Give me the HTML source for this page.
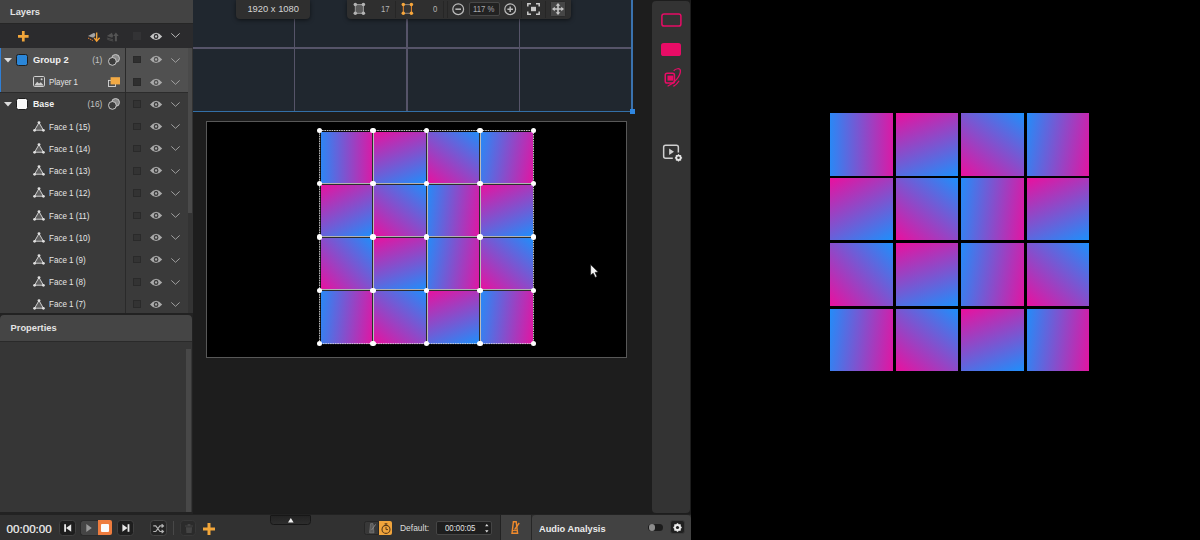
<!DOCTYPE html>
<html><head><meta charset="utf-8"><title>ui</title><style>
*{box-sizing:border-box;margin:0;padding:0}
html,body{width:1200px;height:540px;overflow:hidden;background:#000}
body{font-family:"Liberation Sans",sans-serif;font-size:10px;color:#ddd;position:relative}
.a{position:absolute}
.t{position:absolute;white-space:nowrap;line-height:1}
svg{position:absolute;overflow:visible}
</style></head><body>
<div class="a" style="left:0px;top:0px;width:690.6px;height:540px;background:#1d1d1d;"></div>
<div class="a" style="left:690.6px;top:0px;width:509.4px;height:540px;background:#000;"></div>
<div class="a" style="left:193px;top:0px;width:439.5px;height:111px;background:#20272f;"></div>
<div class="a" style="left:293.9px;top:0px;width:1.4px;height:111px;background:#565469;"></div>
<div class="a" style="left:406.15px;top:0px;width:1.4px;height:111px;background:#565469;"></div>
<div class="a" style="left:518.6px;top:0px;width:1.4px;height:111px;background:#565469;"></div>
<div class="a" style="left:193px;top:47.4px;width:439px;height:1.4px;background:#565469;"></div>
<div class="a" style="left:193px;top:110.8px;width:440px;height:1.2px;background:#336fa6;"></div>
<div class="a" style="left:631.4px;top:0px;width:1.3px;height:112px;background:#3a72ae;"></div>
<div class="a" style="left:629.5px;top:108.5px;width:5.5px;height:5.5px;background:#2f86e0;"></div>
<div class="a" style="left:205.5px;top:120.6px;width:421.4px;height:237.3px;background:#000;border:1px solid #585858"></div>
<div class="a" style="left:319.6px;top:130.5px;width:53.47px;height:53.28px;background:linear-gradient(90deg,#1e8ffb -7%,#ea109e 109%);"></div>
<div class="a" style="left:373.07px;top:130.5px;width:53.47px;height:53.28px;background:linear-gradient(338deg,#1e8ffb,#ea109e);"></div>
<div class="a" style="left:426.54px;top:130.5px;width:53.47px;height:53.28px;background:linear-gradient(218deg,#1e8ffb,#ea109e);"></div>
<div class="a" style="left:480.01px;top:130.5px;width:53.47px;height:53.28px;background:linear-gradient(100deg,#1e8ffb -3%,#ea109e 104%);"></div>
<div class="a" style="left:319.6px;top:183.78px;width:53.47px;height:53.28px;background:linear-gradient(332deg,#1e8ffb,#ea109e);"></div>
<div class="a" style="left:373.07px;top:183.78px;width:53.47px;height:53.28px;background:linear-gradient(220deg,#1e8ffb,#ea109e);"></div>
<div class="a" style="left:426.54px;top:183.78px;width:53.47px;height:53.28px;background:linear-gradient(97deg,#1e8ffb -3%,#ea109e 104%);"></div>
<div class="a" style="left:480.01px;top:183.78px;width:53.47px;height:53.28px;background:linear-gradient(336deg,#1e8ffb,#ea109e);"></div>
<div class="a" style="left:319.6px;top:237.06px;width:53.47px;height:53.28px;background:linear-gradient(228deg,#1e8ffb,#ea109e);"></div>
<div class="a" style="left:373.07px;top:237.06px;width:53.47px;height:53.28px;background:linear-gradient(340deg,#1e8ffb,#ea109e);"></div>
<div class="a" style="left:426.54px;top:237.06px;width:53.47px;height:53.28px;background:linear-gradient(100deg,#1e8ffb -3%,#ea109e 104%);"></div>
<div class="a" style="left:480.01px;top:237.06px;width:53.47px;height:53.28px;background:linear-gradient(222deg,#1e8ffb,#ea109e);"></div>
<div class="a" style="left:319.6px;top:290.34px;width:53.47px;height:53.28px;background:linear-gradient(97deg,#1e8ffb -3%,#ea109e 104%);"></div>
<div class="a" style="left:373.07px;top:290.34px;width:53.47px;height:53.28px;background:linear-gradient(220deg,#1e8ffb,#ea109e);"></div>
<div class="a" style="left:426.54px;top:290.34px;width:53.47px;height:53.28px;background:linear-gradient(338deg,#1e8ffb,#ea109e);"></div>
<div class="a" style="left:480.01px;top:290.34px;width:53.47px;height:53.28px;background:linear-gradient(97deg,#1e8ffb -3%,#ea109e 104%);"></div>
<div class="a" style="left:372.17px;top:130.5px;width:0.9px;height:213.12px;background:#2c2c2c;"></div>
<div class="a" style="left:373.07px;top:130.5px;width:0.9px;height:213.12px;background:#bcbcbc;"></div>
<div class="a" style="left:425.64px;top:130.5px;width:0.9px;height:213.12px;background:#2c2c2c;"></div>
<div class="a" style="left:426.54px;top:130.5px;width:0.9px;height:213.12px;background:#bcbcbc;"></div>
<div class="a" style="left:479.11px;top:130.5px;width:0.9px;height:213.12px;background:#2c2c2c;"></div>
<div class="a" style="left:480.01px;top:130.5px;width:0.9px;height:213.12px;background:#bcbcbc;"></div>
<div class="a" style="left:319.6px;top:182.88px;width:213.88px;height:0.9px;background:#b4b4b4;"></div>
<div class="a" style="left:319.6px;top:183.78px;width:213.88px;height:0.9px;background:#2c2c2c;"></div>
<div class="a" style="left:319.6px;top:236.16px;width:213.88px;height:0.9px;background:#b4b4b4;"></div>
<div class="a" style="left:319.6px;top:237.06px;width:213.88px;height:0.9px;background:#2c2c2c;"></div>
<div class="a" style="left:319.6px;top:289.44px;width:213.88px;height:0.9px;background:#b4b4b4;"></div>
<div class="a" style="left:319.6px;top:290.34px;width:213.88px;height:0.9px;background:#2c2c2c;"></div>
<div class="a" style="left:319.1px;top:130.0px;width:1.7px;height:214.12px;background:#0a0a0a;"></div>
<div class="a" style="left:319.1px;top:130.0px;width:214.88px;height:1.7px;background:#0a0a0a;"></div>
<svg style="left:0;top:0" width="1200" height="540"><rect x="319.6" y="130.5" width="213.88" height="213.12" fill="none" stroke="#dcdcdc" stroke-width="0.9" stroke-dasharray="1.6 0.8"/></svg>
<div class="a" style="left:316.9px;top:127.8px;width:5.4px;height:5.4px;background:#fff;border-radius:50%"></div>
<div class="a" style="left:316.9px;top:181.08px;width:5.4px;height:5.4px;background:#fff;border-radius:50%"></div>
<div class="a" style="left:316.9px;top:234.36px;width:5.4px;height:5.4px;background:#fff;border-radius:50%"></div>
<div class="a" style="left:316.9px;top:287.64px;width:5.4px;height:5.4px;background:#fff;border-radius:50%"></div>
<div class="a" style="left:316.9px;top:340.92px;width:5.4px;height:5.4px;background:#fff;border-radius:50%"></div>
<div class="a" style="left:370.37px;top:127.8px;width:5.4px;height:5.4px;background:#fff;border-radius:50%"></div>
<div class="a" style="left:370.37px;top:181.08px;width:5.4px;height:5.4px;background:#fff;border-radius:50%"></div>
<div class="a" style="left:370.37px;top:234.36px;width:5.4px;height:5.4px;background:#fff;border-radius:50%"></div>
<div class="a" style="left:370.37px;top:287.64px;width:5.4px;height:5.4px;background:#fff;border-radius:50%"></div>
<div class="a" style="left:370.37px;top:340.92px;width:5.4px;height:5.4px;background:#fff;border-radius:50%"></div>
<div class="a" style="left:423.84px;top:127.8px;width:5.4px;height:5.4px;background:#fff;border-radius:50%"></div>
<div class="a" style="left:423.84px;top:181.08px;width:5.4px;height:5.4px;background:#fff;border-radius:50%"></div>
<div class="a" style="left:423.84px;top:234.36px;width:5.4px;height:5.4px;background:#fff;border-radius:50%"></div>
<div class="a" style="left:423.84px;top:287.64px;width:5.4px;height:5.4px;background:#fff;border-radius:50%"></div>
<div class="a" style="left:423.84px;top:340.92px;width:5.4px;height:5.4px;background:#fff;border-radius:50%"></div>
<div class="a" style="left:477.31px;top:127.8px;width:5.4px;height:5.4px;background:#fff;border-radius:50%"></div>
<div class="a" style="left:477.31px;top:181.08px;width:5.4px;height:5.4px;background:#fff;border-radius:50%"></div>
<div class="a" style="left:477.31px;top:234.36px;width:5.4px;height:5.4px;background:#fff;border-radius:50%"></div>
<div class="a" style="left:477.31px;top:287.64px;width:5.4px;height:5.4px;background:#fff;border-radius:50%"></div>
<div class="a" style="left:477.31px;top:340.92px;width:5.4px;height:5.4px;background:#fff;border-radius:50%"></div>
<div class="a" style="left:530.78px;top:127.8px;width:5.4px;height:5.4px;background:#fff;border-radius:50%"></div>
<div class="a" style="left:530.78px;top:181.08px;width:5.4px;height:5.4px;background:#fff;border-radius:50%"></div>
<div class="a" style="left:530.78px;top:234.36px;width:5.4px;height:5.4px;background:#fff;border-radius:50%"></div>
<div class="a" style="left:530.78px;top:287.64px;width:5.4px;height:5.4px;background:#fff;border-radius:50%"></div>
<div class="a" style="left:530.78px;top:340.92px;width:5.4px;height:5.4px;background:#fff;border-radius:50%"></div>
<svg style="left:0;top:0" width="1200" height="540"><polygon points="590.6,264.6 590.6,275.2 593.2,273.2 595.3,277.4 597,276.6 595,272.4 598.2,272" fill="#f4f4f4" stroke="#111" stroke-width="0.6"/></svg>
<div class="a" style="left:830px;top:113px;width:63px;height:62.5px;background:linear-gradient(90deg,#1e8ffb -7%,#ea109e 109%);"></div>
<div class="a" style="left:896px;top:113px;width:61.9px;height:62.5px;background:linear-gradient(338deg,#1e8ffb,#ea109e);"></div>
<div class="a" style="left:961px;top:113px;width:63.1px;height:62.5px;background:linear-gradient(218deg,#1e8ffb,#ea109e);"></div>
<div class="a" style="left:1026.5px;top:113px;width:62.5px;height:62.5px;background:linear-gradient(100deg,#1e8ffb -3%,#ea109e 104%);"></div>
<div class="a" style="left:830px;top:178.1px;width:63px;height:62.2px;background:linear-gradient(332deg,#1e8ffb,#ea109e);"></div>
<div class="a" style="left:896px;top:178.1px;width:61.9px;height:62.2px;background:linear-gradient(220deg,#1e8ffb,#ea109e);"></div>
<div class="a" style="left:961px;top:178.1px;width:63.1px;height:62.2px;background:linear-gradient(97deg,#1e8ffb -3%,#ea109e 104%);"></div>
<div class="a" style="left:1026.5px;top:178.1px;width:62.5px;height:62.2px;background:linear-gradient(336deg,#1e8ffb,#ea109e);"></div>
<div class="a" style="left:830px;top:243px;width:63px;height:62.8px;background:linear-gradient(228deg,#1e8ffb,#ea109e);"></div>
<div class="a" style="left:896px;top:243px;width:61.9px;height:62.8px;background:linear-gradient(340deg,#1e8ffb,#ea109e);"></div>
<div class="a" style="left:961px;top:243px;width:63.1px;height:62.8px;background:linear-gradient(100deg,#1e8ffb -3%,#ea109e 104%);"></div>
<div class="a" style="left:1026.5px;top:243px;width:62.5px;height:62.8px;background:linear-gradient(222deg,#1e8ffb,#ea109e);"></div>
<div class="a" style="left:830px;top:309px;width:63px;height:62px;background:linear-gradient(97deg,#1e8ffb -3%,#ea109e 104%);"></div>
<div class="a" style="left:896px;top:309px;width:61.9px;height:62px;background:linear-gradient(220deg,#1e8ffb,#ea109e);"></div>
<div class="a" style="left:961px;top:309px;width:63.1px;height:62px;background:linear-gradient(338deg,#1e8ffb,#ea109e);"></div>
<div class="a" style="left:1026.5px;top:309px;width:62.5px;height:62px;background:linear-gradient(97deg,#1e8ffb -3%,#ea109e 104%);"></div>
<div class="a" style="left:0px;top:0px;width:193px;height:23px;background:#434343;"></div>
<div class="t" style="left:10px;top:7.6px;font-size:9.3px;color:#e4e4e4;font-weight:bold;">Layers</div>
<div class="a" style="left:0px;top:23px;width:193px;height:1px;background:#262626;"></div>
<div class="a" style="left:0px;top:24px;width:193px;height:23.6px;background:#2b2b2d;"></div>
<div class="a" style="left:0px;top:47.6px;width:193px;height:0.4px;background:#222;"></div>
<div class="a" style="left:0px;top:48px;width:187.5px;height:264.5px;background:#3a3a3a;"></div>
<div class="a" style="left:187.5px;top:48px;width:5.5px;height:264.5px;background:#333;"></div>
<div class="a" style="left:188.3px;top:48px;width:4px;height:165px;background:#4a4a4a;"></div>
<div class="a" style="left:0px;top:48px;width:187.5px;height:44.2px;background:#505050;"></div>
<div class="a" style="left:0px;top:48px;width:1.3px;height:44.2px;background:#2f7fd6;"></div>
<div class="a" style="left:0px;top:92px;width:187.5px;height:1px;background:#2c2c2c;"></div>
<div class="a" style="left:125px;top:48px;width:1px;height:264.5px;background:#2a2a2a;"></div>
<div class="a" style="left:0px;top:312.5px;width:193px;height:3px;background:#222;"></div>
<div class="a" style="left:0px;top:315.2px;width:192px;height:25.8px;background:#454545;border-radius:4px 4px 0 0"></div>
<div class="t" style="left:10.6px;top:323.6px;font-size:9.3px;color:#e4e4e4;font-weight:bold;">Properties</div>
<div class="a" style="left:0px;top:341px;width:192px;height:1px;background:#2a2a2a;"></div>
<div class="a" style="left:0px;top:342px;width:192px;height:170.5px;background:#363636;"></div>
<div class="a" style="left:186.4px;top:349px;width:4.5px;height:163.3px;background:#484848;"></div>
<div class="a" style="left:192px;top:315.5px;width:1px;height:197px;background:#222;"></div>
<div class="a" style="left:0px;top:512.4px;width:193px;height:3px;background:#222;"></div>
<svg style="left:17.6px;top:31px" width="10.6" height="10.6" viewBox="0 0 11 11"><path d="M4.1 0h2.8v4.1H11v2.8H6.9V11H4.1V6.9H0V4.1h4.1z" fill="#f2a63a"/></svg>
<svg style="left:88px;top:31.5px" width="13" height="10" viewBox="0 0 13 10"><path d="M0 4.1 L5.6 0.9 L7.2 1.4 L7.2 3.9 L5.2 5.7Z" fill="#a4a4a4"/><path d="M0 6 L4.9 8.6" fill="none" stroke="#f0822e" stroke-width="1" stroke-dasharray="1.6 0.7"/><path d="M8.7 0.4 V8.8" fill="none" stroke="#f5a83c" stroke-width="1.3"/><path d="M6.2 5.8 L8.7 9.2 L11.6 5.8" fill="none" stroke="#f5a035" stroke-width="1.4"/></svg>
<svg style="left:107.3px;top:31.5px" width="13" height="10" viewBox="0 0 13 10"><path d="M4.9 0.8 L-0.1 4.1 L5.2 5.7 L6.2 4Z" fill="#525252"/><path d="M-0.1 6 L6 7.8 M0.4 7.4 L6.3 9.1" fill="none" stroke="#4c4c4c" stroke-width="1"/><path d="M8.9 9.3 V2.5" fill="none" stroke="#545454" stroke-width="2"/><path d="M6.2 4 L8.9 0.4 L11.7 4Z" fill="#545454"/></svg>
<div class="a" style="left:133.3px;top:32.4px;width:7.4px;height:7.4px;background:#333335;"></div>
<svg style="left:150px;top:31.6px" width="12.2" height="8.8" viewBox="0 0 12 8" preserveAspectRatio="none"><path d="M0 4 Q6 -2.6 12 4 Q6 10.6 0 4Z" fill="#c4c4c4"/><circle cx="6" cy="4" r="2.3" fill="#2b2b2d"/><circle cx="6" cy="4" r="1.1" fill="#c4c4c4"/></svg>
<svg style="left:171.3px;top:33.4px" width="9" height="5" viewBox="0 0 9 5"><path d="M0.3 0.4 L4.5 4.3 L8.7 0.4" fill="none" stroke="#c4c4c4" stroke-width="0.9"/></svg>
<div class="a" style="left:133.3px;top:56.05px;width:7.4px;height:7.4px;background:#2f2f2f;border:0.5px solid #2a2a2a"></div>
<svg style="left:150px;top:55.35px" width="12.2" height="8.8" viewBox="0 0 12 8" preserveAspectRatio="none"><path d="M0 4 Q6 -2.6 12 4 Q6 10.6 0 4Z" fill="#aaaaaa"/><circle cx="6" cy="4" r="2.3" fill="#505050"/><circle cx="6" cy="4" r="1.1" fill="#aaaaaa"/></svg>
<svg style="left:171.3px;top:57.55px" width="9" height="5" viewBox="0 0 9 5"><path d="M0.3 0.4 L4.5 4.3 L8.7 0.4" fill="none" stroke="#a8a8a8" stroke-width="0.9"/></svg>
<div class="a" style="left:133.3px;top:78.27px;width:7.4px;height:7.4px;background:#2f2f2f;border:0.5px solid #2a2a2a"></div>
<svg style="left:150px;top:77.57px" width="12.2" height="8.8" viewBox="0 0 12 8" preserveAspectRatio="none"><path d="M0 4 Q6 -2.6 12 4 Q6 10.6 0 4Z" fill="#aaaaaa"/><circle cx="6" cy="4" r="2.3" fill="#505050"/><circle cx="6" cy="4" r="1.1" fill="#aaaaaa"/></svg>
<svg style="left:171.3px;top:79.77px" width="9" height="5" viewBox="0 0 9 5"><path d="M0.3 0.4 L4.5 4.3 L8.7 0.4" fill="none" stroke="#a8a8a8" stroke-width="0.9"/></svg>
<div class="a" style="left:133.3px;top:100.49px;width:7.4px;height:7.4px;background:#333;border:0.5px solid #2a2a2a"></div>
<svg style="left:150px;top:99.78999999999999px" width="12.2" height="8.8" viewBox="0 0 12 8" preserveAspectRatio="none"><path d="M0 4 Q6 -2.6 12 4 Q6 10.6 0 4Z" fill="#aaaaaa"/><circle cx="6" cy="4" r="2.3" fill="#3a3a3a"/><circle cx="6" cy="4" r="1.1" fill="#aaaaaa"/></svg>
<svg style="left:171.3px;top:101.99px" width="9" height="5" viewBox="0 0 9 5"><path d="M0.3 0.4 L4.5 4.3 L8.7 0.4" fill="none" stroke="#a8a8a8" stroke-width="0.9"/></svg>
<div class="a" style="left:133.3px;top:122.71px;width:7.4px;height:7.4px;background:#333;border:0.5px solid #2a2a2a"></div>
<svg style="left:150px;top:122.00999999999999px" width="12.2" height="8.8" viewBox="0 0 12 8" preserveAspectRatio="none"><path d="M0 4 Q6 -2.6 12 4 Q6 10.6 0 4Z" fill="#aaaaaa"/><circle cx="6" cy="4" r="2.3" fill="#3a3a3a"/><circle cx="6" cy="4" r="1.1" fill="#aaaaaa"/></svg>
<svg style="left:171.3px;top:124.21px" width="9" height="5" viewBox="0 0 9 5"><path d="M0.3 0.4 L4.5 4.3 L8.7 0.4" fill="none" stroke="#a8a8a8" stroke-width="0.9"/></svg>
<div class="a" style="left:133.3px;top:144.93px;width:7.4px;height:7.4px;background:#333;border:0.5px solid #2a2a2a"></div>
<svg style="left:150px;top:144.23px" width="12.2" height="8.8" viewBox="0 0 12 8" preserveAspectRatio="none"><path d="M0 4 Q6 -2.6 12 4 Q6 10.6 0 4Z" fill="#aaaaaa"/><circle cx="6" cy="4" r="2.3" fill="#3a3a3a"/><circle cx="6" cy="4" r="1.1" fill="#aaaaaa"/></svg>
<svg style="left:171.3px;top:146.43px" width="9" height="5" viewBox="0 0 9 5"><path d="M0.3 0.4 L4.5 4.3 L8.7 0.4" fill="none" stroke="#a8a8a8" stroke-width="0.9"/></svg>
<div class="a" style="left:133.3px;top:167.15px;width:7.4px;height:7.4px;background:#333;border:0.5px solid #2a2a2a"></div>
<svg style="left:150px;top:166.45px" width="12.2" height="8.8" viewBox="0 0 12 8" preserveAspectRatio="none"><path d="M0 4 Q6 -2.6 12 4 Q6 10.6 0 4Z" fill="#aaaaaa"/><circle cx="6" cy="4" r="2.3" fill="#3a3a3a"/><circle cx="6" cy="4" r="1.1" fill="#aaaaaa"/></svg>
<svg style="left:171.3px;top:168.65px" width="9" height="5" viewBox="0 0 9 5"><path d="M0.3 0.4 L4.5 4.3 L8.7 0.4" fill="none" stroke="#a8a8a8" stroke-width="0.9"/></svg>
<div class="a" style="left:133.3px;top:189.37px;width:7.4px;height:7.4px;background:#333;border:0.5px solid #2a2a2a"></div>
<svg style="left:150px;top:188.67px" width="12.2" height="8.8" viewBox="0 0 12 8" preserveAspectRatio="none"><path d="M0 4 Q6 -2.6 12 4 Q6 10.6 0 4Z" fill="#aaaaaa"/><circle cx="6" cy="4" r="2.3" fill="#3a3a3a"/><circle cx="6" cy="4" r="1.1" fill="#aaaaaa"/></svg>
<svg style="left:171.3px;top:190.87px" width="9" height="5" viewBox="0 0 9 5"><path d="M0.3 0.4 L4.5 4.3 L8.7 0.4" fill="none" stroke="#a8a8a8" stroke-width="0.9"/></svg>
<div class="a" style="left:133.3px;top:211.59px;width:7.4px;height:7.4px;background:#333;border:0.5px solid #2a2a2a"></div>
<svg style="left:150px;top:210.89px" width="12.2" height="8.8" viewBox="0 0 12 8" preserveAspectRatio="none"><path d="M0 4 Q6 -2.6 12 4 Q6 10.6 0 4Z" fill="#aaaaaa"/><circle cx="6" cy="4" r="2.3" fill="#3a3a3a"/><circle cx="6" cy="4" r="1.1" fill="#aaaaaa"/></svg>
<svg style="left:171.3px;top:213.09px" width="9" height="5" viewBox="0 0 9 5"><path d="M0.3 0.4 L4.5 4.3 L8.7 0.4" fill="none" stroke="#a8a8a8" stroke-width="0.9"/></svg>
<div class="a" style="left:133.3px;top:233.81px;width:7.4px;height:7.4px;background:#333;border:0.5px solid #2a2a2a"></div>
<svg style="left:150px;top:233.10999999999999px" width="12.2" height="8.8" viewBox="0 0 12 8" preserveAspectRatio="none"><path d="M0 4 Q6 -2.6 12 4 Q6 10.6 0 4Z" fill="#aaaaaa"/><circle cx="6" cy="4" r="2.3" fill="#3a3a3a"/><circle cx="6" cy="4" r="1.1" fill="#aaaaaa"/></svg>
<svg style="left:171.3px;top:235.31px" width="9" height="5" viewBox="0 0 9 5"><path d="M0.3 0.4 L4.5 4.3 L8.7 0.4" fill="none" stroke="#a8a8a8" stroke-width="0.9"/></svg>
<div class="a" style="left:133.3px;top:256.03px;width:7.4px;height:7.4px;background:#333;border:0.5px solid #2a2a2a"></div>
<svg style="left:150px;top:255.32999999999998px" width="12.2" height="8.8" viewBox="0 0 12 8" preserveAspectRatio="none"><path d="M0 4 Q6 -2.6 12 4 Q6 10.6 0 4Z" fill="#aaaaaa"/><circle cx="6" cy="4" r="2.3" fill="#3a3a3a"/><circle cx="6" cy="4" r="1.1" fill="#aaaaaa"/></svg>
<svg style="left:171.3px;top:257.53px" width="9" height="5" viewBox="0 0 9 5"><path d="M0.3 0.4 L4.5 4.3 L8.7 0.4" fill="none" stroke="#a8a8a8" stroke-width="0.9"/></svg>
<div class="a" style="left:133.3px;top:278.25px;width:7.4px;height:7.4px;background:#333;border:0.5px solid #2a2a2a"></div>
<svg style="left:150px;top:277.55px" width="12.2" height="8.8" viewBox="0 0 12 8" preserveAspectRatio="none"><path d="M0 4 Q6 -2.6 12 4 Q6 10.6 0 4Z" fill="#aaaaaa"/><circle cx="6" cy="4" r="2.3" fill="#3a3a3a"/><circle cx="6" cy="4" r="1.1" fill="#aaaaaa"/></svg>
<svg style="left:171.3px;top:279.75px" width="9" height="5" viewBox="0 0 9 5"><path d="M0.3 0.4 L4.5 4.3 L8.7 0.4" fill="none" stroke="#a8a8a8" stroke-width="0.9"/></svg>
<div class="a" style="left:133.3px;top:300.47px;width:7.4px;height:7.4px;background:#333;border:0.5px solid #2a2a2a"></div>
<svg style="left:150px;top:299.77000000000004px" width="12.2" height="8.8" viewBox="0 0 12 8" preserveAspectRatio="none"><path d="M0 4 Q6 -2.6 12 4 Q6 10.6 0 4Z" fill="#aaaaaa"/><circle cx="6" cy="4" r="2.3" fill="#3a3a3a"/><circle cx="6" cy="4" r="1.1" fill="#aaaaaa"/></svg>
<svg style="left:171.3px;top:301.97px" width="9" height="5" viewBox="0 0 9 5"><path d="M0.3 0.4 L4.5 4.3 L8.7 0.4" fill="none" stroke="#a8a8a8" stroke-width="0.9"/></svg>
<svg style="left:4.3px;top:57.75px" width="8" height="5" viewBox="0 0 8 5"><path d="M0 0 L8 0 L4 4.6Z" fill="#dcdcdc"/></svg>
<div class="a" style="left:16.4px;top:53.95px;width:11.6px;height:11.6px;background:#2a86d8;border-radius:2.4px;border:0.8px solid #1e1e1e"></div>
<div class="t" style="left:32.8px;top:54.65px;font-size:9.8px;color:#f0f0f0;font-weight:bold;transform:scaleX(0.95);transform-origin:0 0;">Group 2</div>
<div class="t" style="right:1097.7px;top:55.65px;font-size:8.3px;color:#c4c4c4">(1)</div>
<svg style="left:108px;top:53.75px" width="12" height="12" viewBox="0 0 12 12"><circle cx="7.6" cy="4.4" r="3.9" fill="#8a8a8a" stroke="#cfcfcf" stroke-width="0.9"/><circle cx="4.4" cy="7.4" r="3.9" fill="#3c3c3c" stroke="#d8d8d8" stroke-width="0.9"/></svg>
<svg style="left:4.3px;top:102.19px" width="8" height="5" viewBox="0 0 8 5"><path d="M0 0 L8 0 L4 4.6Z" fill="#dcdcdc"/></svg>
<div class="a" style="left:16.4px;top:98.39px;width:11.6px;height:11.6px;background:#fafafa;border-radius:2.4px;border:0.8px solid #1e1e1e"></div>
<div class="t" style="left:32.8px;top:99.09px;font-size:9.8px;color:#f0f0f0;font-weight:bold;transform:scaleX(0.9);transform-origin:0 0;">Base</div>
<div class="t" style="right:1097.7px;top:100.09px;font-size:8.3px;color:#c4c4c4">(16)</div>
<svg style="left:108px;top:98.19px" width="12" height="12" viewBox="0 0 12 12"><circle cx="7.6" cy="4.4" r="3.9" fill="#8a8a8a" stroke="#cfcfcf" stroke-width="0.9"/><circle cx="4.4" cy="7.4" r="3.9" fill="#3c3c3c" stroke="#d8d8d8" stroke-width="0.9"/></svg>
<svg style="left:33px;top:75.87px" width="12" height="11" viewBox="0 0 12 11"><rect x="0.5" y="0.5" width="11" height="10" rx="1.2" fill="none" stroke="#cfcfcf" stroke-width="1"/><path d="M1.2 9.6 L4.2 5.8 L6 7.6 L7.8 6.2 L10.8 9.6Z" fill="#cfcfcf"/><circle cx="8.6" cy="3.3" r="1" fill="#cfcfcf"/></svg>
<div class="t" style="left:48.6px;top:77.67px;font-size:8.6px;color:#e6e6e6;font-weight:normal;transform:scaleX(0.92);transform-origin:0 0;">Player 1</div>
<svg style="left:108px;top:77.17px" width="12" height="10" viewBox="0 0 12 10"><rect x="0.5" y="3.4" width="7" height="6.1" fill="none" stroke="#d8d8d8" stroke-width="0.9"/><rect x="2.6" y="0.2" width="9.4" height="7.2" fill="#f2aa45"/></svg>
<svg style="left:33px;top:120.81px" width="12" height="11" viewBox="0 0 12 11"><path d="M6 1.6 L1.6 9.2 L10.4 9.2Z" fill="#5e5e5e" stroke="#cfcfcf" stroke-width="1"/><circle cx="6" cy="1.6" r="1.4" fill="#e0e0e0"/><circle cx="1.6" cy="9.3" r="1.4" fill="#e0e0e0"/><circle cx="10.4" cy="9.3" r="1.4" fill="#e0e0e0"/></svg>
<div class="t" style="left:48.5px;top:122.71px;font-size:8.6px;color:#e6e6e6;font-weight:normal;transform:scaleX(0.935);transform-origin:0 0;">Face 1 (15)</div>
<svg style="left:33px;top:143.03px" width="12" height="11" viewBox="0 0 12 11"><path d="M6 1.6 L1.6 9.2 L10.4 9.2Z" fill="#5e5e5e" stroke="#cfcfcf" stroke-width="1"/><circle cx="6" cy="1.6" r="1.4" fill="#e0e0e0"/><circle cx="1.6" cy="9.3" r="1.4" fill="#e0e0e0"/><circle cx="10.4" cy="9.3" r="1.4" fill="#e0e0e0"/></svg>
<div class="t" style="left:48.5px;top:144.93px;font-size:8.6px;color:#e6e6e6;font-weight:normal;transform:scaleX(0.935);transform-origin:0 0;">Face 1 (14)</div>
<svg style="left:33px;top:165.25px" width="12" height="11" viewBox="0 0 12 11"><path d="M6 1.6 L1.6 9.2 L10.4 9.2Z" fill="#5e5e5e" stroke="#cfcfcf" stroke-width="1"/><circle cx="6" cy="1.6" r="1.4" fill="#e0e0e0"/><circle cx="1.6" cy="9.3" r="1.4" fill="#e0e0e0"/><circle cx="10.4" cy="9.3" r="1.4" fill="#e0e0e0"/></svg>
<div class="t" style="left:48.5px;top:167.15px;font-size:8.6px;color:#e6e6e6;font-weight:normal;transform:scaleX(0.935);transform-origin:0 0;">Face 1 (13)</div>
<svg style="left:33px;top:187.47px" width="12" height="11" viewBox="0 0 12 11"><path d="M6 1.6 L1.6 9.2 L10.4 9.2Z" fill="#5e5e5e" stroke="#cfcfcf" stroke-width="1"/><circle cx="6" cy="1.6" r="1.4" fill="#e0e0e0"/><circle cx="1.6" cy="9.3" r="1.4" fill="#e0e0e0"/><circle cx="10.4" cy="9.3" r="1.4" fill="#e0e0e0"/></svg>
<div class="t" style="left:48.5px;top:189.37px;font-size:8.6px;color:#e6e6e6;font-weight:normal;transform:scaleX(0.935);transform-origin:0 0;">Face 1 (12)</div>
<svg style="left:33px;top:209.69px" width="12" height="11" viewBox="0 0 12 11"><path d="M6 1.6 L1.6 9.2 L10.4 9.2Z" fill="#5e5e5e" stroke="#cfcfcf" stroke-width="1"/><circle cx="6" cy="1.6" r="1.4" fill="#e0e0e0"/><circle cx="1.6" cy="9.3" r="1.4" fill="#e0e0e0"/><circle cx="10.4" cy="9.3" r="1.4" fill="#e0e0e0"/></svg>
<div class="t" style="left:48.5px;top:211.59px;font-size:8.6px;color:#e6e6e6;font-weight:normal;transform:scaleX(0.935);transform-origin:0 0;">Face 1 (11)</div>
<svg style="left:33px;top:231.91px" width="12" height="11" viewBox="0 0 12 11"><path d="M6 1.6 L1.6 9.2 L10.4 9.2Z" fill="#5e5e5e" stroke="#cfcfcf" stroke-width="1"/><circle cx="6" cy="1.6" r="1.4" fill="#e0e0e0"/><circle cx="1.6" cy="9.3" r="1.4" fill="#e0e0e0"/><circle cx="10.4" cy="9.3" r="1.4" fill="#e0e0e0"/></svg>
<div class="t" style="left:48.5px;top:233.81px;font-size:8.6px;color:#e6e6e6;font-weight:normal;transform:scaleX(0.935);transform-origin:0 0;">Face 1 (10)</div>
<svg style="left:33px;top:254.13px" width="12" height="11" viewBox="0 0 12 11"><path d="M6 1.6 L1.6 9.2 L10.4 9.2Z" fill="#5e5e5e" stroke="#cfcfcf" stroke-width="1"/><circle cx="6" cy="1.6" r="1.4" fill="#e0e0e0"/><circle cx="1.6" cy="9.3" r="1.4" fill="#e0e0e0"/><circle cx="10.4" cy="9.3" r="1.4" fill="#e0e0e0"/></svg>
<div class="t" style="left:48.5px;top:256.03px;font-size:8.6px;color:#e6e6e6;font-weight:normal;transform:scaleX(0.935);transform-origin:0 0;">Face 1 (9)</div>
<svg style="left:33px;top:276.35px" width="12" height="11" viewBox="0 0 12 11"><path d="M6 1.6 L1.6 9.2 L10.4 9.2Z" fill="#5e5e5e" stroke="#cfcfcf" stroke-width="1"/><circle cx="6" cy="1.6" r="1.4" fill="#e0e0e0"/><circle cx="1.6" cy="9.3" r="1.4" fill="#e0e0e0"/><circle cx="10.4" cy="9.3" r="1.4" fill="#e0e0e0"/></svg>
<div class="t" style="left:48.5px;top:278.25px;font-size:8.6px;color:#e6e6e6;font-weight:normal;transform:scaleX(0.935);transform-origin:0 0;">Face 1 (8)</div>
<svg style="left:33px;top:298.57px" width="12" height="11" viewBox="0 0 12 11"><path d="M6 1.6 L1.6 9.2 L10.4 9.2Z" fill="#5e5e5e" stroke="#cfcfcf" stroke-width="1"/><circle cx="6" cy="1.6" r="1.4" fill="#e0e0e0"/><circle cx="1.6" cy="9.3" r="1.4" fill="#e0e0e0"/><circle cx="10.4" cy="9.3" r="1.4" fill="#e0e0e0"/></svg>
<div class="t" style="left:48.5px;top:300.47px;font-size:8.6px;color:#e6e6e6;font-weight:normal;transform:scaleX(0.935);transform-origin:0 0;">Face 1 (7)</div>
<div class="a" style="left:236px;top:0px;width:73.7px;height:18.7px;background:#2f2f2f;border-radius:0 0 4px 4px;box-shadow:0 1px 4px rgba(0,0,0,.55)"></div>
<div class="t" style="left:247.4px;top:4.1px;font-size:9.4px;color:#d4d4d4;font-weight:normal;">1920 x 1080</div>
<div class="a" style="left:347px;top:0px;width:223.5px;height:18.6px;background:#2f2f2f;border-radius:0 0 4px 4px;box-shadow:0 1px 4px rgba(0,0,0,.55)"></div>
<svg style="left:353px;top:3px" width="13" height="12" viewBox="0 0 13 12"><rect x="2.3" y="1.6" width="8.1" height="8.7" fill="#5a5a5a"/><path d="M2.3 1.6 V10.3 M10.4 1.6 V10.3" stroke="#9c9c9c" stroke-width="1"/><path d="M2.3 1.6 H10.4 M2.3 10.3 H10.4" stroke="#9c9c9c" stroke-width="1"/><circle cx="2.3" cy="1.6" r="1.75" fill="#b4b4b4"/><circle cx="2.3" cy="10.3" r="1.75" fill="#b4b4b4"/><circle cx="10.4" cy="1.6" r="1.75" fill="#b4b4b4"/><circle cx="10.4" cy="10.3" r="1.75" fill="#b4b4b4"/></svg>
<div class="t" style="left:381.2px;top:5px;font-size:8.6px;color:#b4b4b4;font-weight:normal;transform:scaleX(0.9);transform-origin:0 0;">17</div>
<div class="a" style="left:394.6px;top:1px;width:1px;height:16.5px;background:#262626;"></div>
<svg style="left:401.1px;top:3px" width="13" height="12" viewBox="0 0 13 12"><rect x="2.3" y="1.6" width="8.1" height="8.7" fill="#343434"/><path d="M2.3 1.6 V10.3 M10.4 1.6 V10.3" stroke="#f08a2c" stroke-width="1"/><path d="M2.3 1.6 H10.4 M2.3 10.3 H10.4" stroke="#8c8480" stroke-width="1"/><circle cx="2.3" cy="1.6" r="1.75" fill="#f7a73c"/><circle cx="2.3" cy="10.3" r="1.75" fill="#f7a73c"/><circle cx="10.4" cy="1.6" r="1.75" fill="#f7a73c"/><circle cx="10.4" cy="10.3" r="1.75" fill="#f7a73c"/></svg>
<div class="t" style="left:433.4px;top:5px;font-size:8.6px;color:#b4b4b4;font-weight:normal;transform:scaleX(0.9);transform-origin:0 0;">0</div>
<div class="a" style="left:443.2px;top:1px;width:1px;height:16.5px;background:#262626;"></div>
<div class="a" style="left:446.8px;top:1px;width:1px;height:16.5px;background:#262626;"></div>
<svg style="left:452px;top:2.8px" width="12.4" height="12.4" viewBox="0 0 12.4 12.4"><circle cx="6.2" cy="6.2" r="5.4" fill="none" stroke="#bcbcbc" stroke-width="1.2"/><path d="M3.4 6.2 H9" stroke="#bcbcbc" stroke-width="1.5"/></svg>
<div class="a" style="left:469px;top:2.4px;width:30.6px;height:13.2px;background:#222;border:1px solid #474747;border-radius:2px"></div>
<div class="t" style="left:473.4px;top:5px;font-size:8.6px;color:#a8a8ac;font-weight:normal;transform:scaleX(0.9);transform-origin:0 0;">117 %</div>
<svg style="left:504px;top:2.8px" width="12.4" height="12.4" viewBox="0 0 12.4 12.4"><circle cx="6.2" cy="6.2" r="5.4" fill="none" stroke="#bcbcbc" stroke-width="1.2"/><path d="M3.4 6.2 H9 M6.2 3.4 V9" stroke="#bcbcbc" stroke-width="1.5"/></svg>
<div class="a" style="left:521px;top:1px;width:1px;height:16.5px;background:#262626;"></div>
<svg style="left:527px;top:3px" width="13" height="12" viewBox="0 0 13 12"><path d="M0.8 3.6 V0.8 H4 M9 0.8 H12.2 V3.6 M12.2 8.4 V11.2 H9 M4 11.2 H0.8 V8.4" fill="none" stroke="#cacaca" stroke-width="1.5"/><rect x="4" y="3.8" width="5" height="4.4" fill="#cacaca"/></svg>
<div class="a" style="left:545.3px;top:1px;width:1px;height:16.5px;background:#262626;"></div>
<div class="a" style="left:550.2px;top:1px;width:15.6px;height:15.8px;background:#464646;border-radius:1.5px;border:1px solid #2a2a2a"></div>
<svg style="left:552.3px;top:2.6px" width="12" height="12" viewBox="0 0 12 12"><path d="M6 0 L8.3 2.8 H6.8 V5.2 H9.2 V3.7 L12 6 L9.2 8.3 V6.8 H6.8 V9.2 H8.3 L6 12 L3.7 9.2 H5.2 V6.8 H2.8 V8.3 L0 6 L2.8 3.7 V5.2 H5.2 V2.8 H3.7Z" fill="#c6c6c6"/></svg>
<div class="a" style="left:651.7px;top:0.8px;width:38.8px;height:512.4px;background:#333;border-radius:4px 4px 4px 4px"></div>
<svg style="left:661px;top:13px" width="21" height="14" viewBox="0 0 21 14"><rect x="0.9" y="0.9" width="19" height="12.2" rx="2.2" fill="none" stroke="#e80c66" stroke-width="1.5"/></svg>
<div class="a" style="left:661.2px;top:42.5px;width:20px;height:13.4px;background:#e80c66;border-radius:2.6px"></div>
<svg style="left:663.6px;top:68.4px" width="17" height="19" viewBox="0 0 17 19"><rect x="1.25" y="5.25" width="9.2" height="9.7" rx="1.8" fill="none" stroke="#e80c66" stroke-width="1.5"/><rect x="3.5" y="7.6" width="5.8" height="5" fill="#e80c66"/><path d="M9.7 2.9 C11.5 0.3 16.2 -0.2 16.4 2.8 C16.6 8 11 14.5 3.6 18.3 M15.1 12.7 Q13 16.4 9.4 18.4" fill="none" stroke="#e80c66" stroke-width="1.25"/></svg>
<svg style="left:663px;top:143.6px" width="20" height="18" viewBox="0 0 20 18"><path d="M9.8 14.15 H2.6 Q0.65 14.15 0.65 12.2 V3.1 Q0.65 1.15 2.6 1.15 H13.4 Q15.35 1.15 15.35 3.1 V8.6" fill="none" stroke="#cfcfcf" stroke-width="1.5"/><path d="M6.1 4.5 L11 7.75 L6.1 11Z" fill="#cfcfcf"/><circle cx="15.5" cy="13.8" r="2.3" fill="none" stroke="#e4e4e4" stroke-width="1.6"/><path d="M15.5 10.2 V17.4 M11.9 13.8 H19.1 M13 11.3 L18 16.3 M18 11.3 L13 16.3" stroke="#e4e4e4" stroke-width="1.2"/><circle cx="15.5" cy="13.8" r="1.3" fill="#303030"/></svg>
<div class="a" style="left:193px;top:513.2px;width:459px;height:2.2px;background:#1c1c1c;"></div>
<div class="a" style="left:0px;top:515.3px;width:690.6px;height:24.7px;background:#313131;"></div>
<div class="a" style="left:0px;top:514.4px;width:690.6px;height:0.9px;background:#222;"></div>
<div class="t" style="left:6.6px;top:522.6px;font-size:11.6px;color:#f6f6f6;font-weight:normal;-webkit-text-stroke:0.2px #f6f6f6;">00:00:00</div>
<div class="a" style="left:59.2px;top:519.9px;width:17px;height:15.8px;background:#1e1e1e;border-radius:3.5px;border:1px solid #404040"></div>
<svg style="left:64px;top:524.1px" width="7.6" height="8" viewBox="0 0 8 8"><rect x="0.2" y="0" width="1.9" height="8" fill="#e8e8e8"/><path d="M7.6 0 V8 L2.2 4Z" fill="#e8e8e8"/></svg>
<div class="a" style="left:80.2px;top:519.9px;width:18px;height:15.8px;background:#454545;border-radius:3.5px 0 0 3.5px;border:1px solid #2a2a2a;border-right:none"></div>
<svg style="left:86.4px;top:524px" width="6" height="8" viewBox="0 0 6 8"><path d="M0.3 0 L5.8 4 L0.3 8Z" fill="#9a9a9a"/></svg>
<div class="a" style="left:97.9px;top:520.2px;width:14.2px;height:15.2px;background:#ee7c3e;border-radius:0 2px 2px 0"></div>
<div class="a" style="left:100.9px;top:523.8px;width:8.2px;height:8px;background:#fafafa;border-radius:1px"></div>
<div class="a" style="left:117.2px;top:519.9px;width:16.6px;height:15.8px;background:#1e1e1e;border-radius:3.5px;border:1px solid #404040"></div>
<svg style="left:121.9px;top:524.1px" width="7.6" height="8" viewBox="0 0 8 8"><rect x="5.9" y="0" width="1.9" height="8" fill="#e8e8e8"/><path d="M0.4 0 V8 L5.8 4Z" fill="#e8e8e8"/></svg>
<div class="a" style="left:150.2px;top:519.9px;width:16.8px;height:15.8px;background:#242424;border-radius:3.5px;border:1px solid #454545"></div>
<svg style="left:152.9px;top:523.6px" width="12" height="9.4" viewBox="0 0 11 9"><path d="M0 1.8 H2.4 L6.4 7.2 H9.4 M0 7.2 H2.4 L6.4 1.8 H9.4 M8 0.2 L9.8 1.8 L8 3.4 M8 5.6 L9.8 7.2 L8 8.8" fill="none" stroke="#b4b4b4" stroke-width="1.1"/></svg>
<div class="a" style="left:172.8px;top:520.6px;width:1px;height:14.4px;background:#484848;"></div>
<div class="a" style="left:180.3px;top:519.9px;width:15.8px;height:15.8px;background:#2b2b2b;border-radius:3.5px;border:1px solid #383838"></div>
<svg style="left:184.6px;top:523.6px" width="8" height="9" viewBox="0 0 8 9"><path d="M0 1.4 H8 V2.6 H0Z M2.6 0 H5.4 V1.4 H2.6Z M0.9 3.2 H7.1 L6.6 9 H1.4Z" fill="#444"/></svg>
<svg style="left:203px;top:522.6px" width="12" height="12" viewBox="0 0 12 12"><path d="M4.5 0h3v4.5H12v3H7.5V12H4.5V7.5H0V4.5h4.5z" fill="#f2a63a"/></svg>
<div class="a" style="left:270.2px;top:515px;width:40.6px;height:9.8px;background:linear-gradient(#232323,#2d2d2d);border-radius:1px 1px 3.5px 3.5px;border:1px solid #171717"></div>
<svg style="left:287.7px;top:517.8px" width="5.6" height="4.4" viewBox="0 0 5.6 3.8" preserveAspectRatio="none"><path d="M0 3.8 L2.8 0 L5.6 3.8Z" fill="#f0f0f0"/></svg>
<div class="a" style="left:364.3px;top:520.7px;width:14.7px;height:14.5px;background:#383838;border-radius:2.5px 0 0 2.5px;border:1px solid #262626"></div>
<svg style="left:368.6px;top:523px" width="7" height="10.4" viewBox="0 0 7 10.4"><path d="M1.6 0.6 H4 L5 9.8 H0.6Z" fill="#5a5a5a" stroke="#7a7a7a" stroke-width="0.7"/><path d="M2.6 7 L6.6 1.4" stroke="#8a8a8a" stroke-width="0.9"/></svg>
<div class="a" style="left:379px;top:520.9px;width:12.8px;height:14.2px;background:#f0a43c;border-radius:0 2px 2px 0"></div>
<svg style="left:380.6px;top:522.6px" width="10" height="11.4" viewBox="0 0 10 11.4"><circle cx="5" cy="6.4" r="4" fill="none" stroke="#5a3a18" stroke-width="1.1"/><path d="M3.6 0.8 H6.4 M5 0.8 V2.4 M5 4 V6.6 H7" fill="none" stroke="#5a3a18" stroke-width="1"/></svg>
<div class="t" style="left:400px;top:523.4px;font-size:9.4px;color:#dcdcdc;font-weight:normal;transform:scaleX(0.9);transform-origin:0 0;">Default:</div>
<div class="a" style="left:436.3px;top:521px;width:55.6px;height:14.3px;background:#1e1e1e;border:1px solid #454545;border-radius:2px"></div>
<div class="t" style="left:445.2px;top:524.1px;font-size:8.5px;color:#e4e4e4;font-weight:normal;transform:scaleX(0.92);transform-origin:0 0;">00:00:05</div>
<svg style="left:484.8px;top:523.9px" width="3.6" height="8.6" viewBox="0 0 4 10"><path d="M0 2.6 L2 0 L4 2.6Z M0 7.4 L2 10 L4 7.4Z" fill="#e0e0e0"/></svg>
<div class="a" style="left:499.6px;top:514.5px;width:1.6px;height:25.5px;background:#222;"></div>
<div class="a" style="left:501.2px;top:514.8px;width:30px;height:25.2px;background:#404040;"></div>
<svg style="left:511.4px;top:521.4px" width="9" height="13" viewBox="0 0 9 13"><path d="M2.4 0.8 H5.2 L6.6 12.2 H1Z" fill="none" stroke="#f08a2c" stroke-width="1.4"/><path d="M3.6 8.6 L8.2 2" stroke="#f08a2c" stroke-width="1.4"/><path d="M1.4 9.6 H6.2" stroke="#f08a2c" stroke-width="1"/></svg>
<div class="a" style="left:531.2px;top:514.5px;width:0.8px;height:25.5px;background:#262626;"></div>
<div class="a" style="left:531.8px;top:514.8px;width:158.8px;height:25.2px;background:#424242;border-radius:4px 4px 0 0"></div>
<div class="t" style="left:538.6px;top:524px;font-size:9.6px;color:#ececec;font-weight:bold;transform:scaleX(0.965);transform-origin:0 0;">Audio Analysis</div>
<div class="a" style="left:648.4px;top:524px;width:14.2px;height:7px;background:#1c1c1c;border-radius:3.5px"></div>
<div class="a" style="left:648.8px;top:524.4px;width:6.2px;height:6.2px;background:#8c8c8c;border-radius:50%"></div>
<div class="a" style="left:670.2px;top:520.2px;width:14.8px;height:14.2px;background:#202020;border-radius:3px;border:1px solid #3a3a3a"></div>
<svg style="left:673.1px;top:522.9px" width="9" height="9" viewBox="0 0 9 9"><circle cx="4.5" cy="4.5" r="2.6" fill="none" stroke="#ececec" stroke-width="1.8"/><path d="M4.5 0.3 V8.7 M0.3 4.5 H8.7 M1.5 1.5 L7.5 7.5 M7.5 1.5 L1.5 7.5" stroke="#ececec" stroke-width="1.5"/><circle cx="4.5" cy="4.5" r="1.6" fill="#202020"/></svg>
</body></html>
